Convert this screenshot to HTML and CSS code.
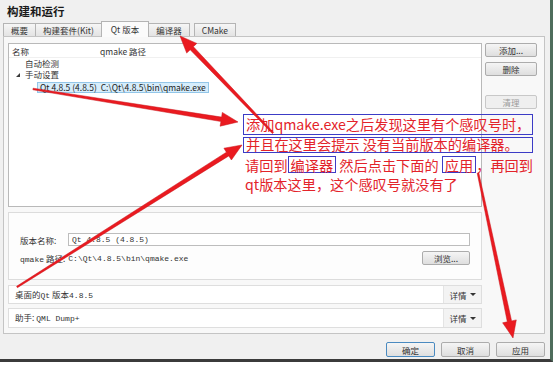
FILE: index.html
```html
<!DOCTYPE html>
<html>
  <head>
    <meta charset="utf-8">
    <link rel="stylesheet" href="styles.css">
  </head>
  <body>
    <div class="window">
      <div class="title">构建和运行</div>

      <div class="tabs">
        <div class="tab">概要</div>
        <div class="tab">构建套件(Kit)</div>
        <div class="tab active">Qt 版本</div>
        <div class="tab">编译器</div>
        <div class="tab tab-apart">CMake</div>
      </div>

      <div class="panel">
        <div class="versions">
          <div class="version-list">
            <div class="list-head">
              <span class="col-name">名称</span>
              <span>qmake 路径</span>
            </div>
            <div class="node">自动检测</div>
            <div class="node node-open"><span class="twisty"></span>手动设置</div>
            <div class="leaf">
              <span class="selected">Qt 4.8.5 (4.8.5)&nbsp;&nbsp;C:\Qt\4.8.5\bin\qmake.exe</span>
            </div>
          </div>
          <div class="side-buttons">
            <button class="btn">添加...</button>
            <button class="btn">删除</button>
            <button class="btn btn-disabled clean">清理</button>
          </div>
        </div>

        <div class="details">
          <div class="field">
            <span class="label">版本名称:</span>
            <div class="input mono">Qt 4.8.5 (4.8.5)</div>
          </div>
          <div class="field field-path">
            <span class="label"><span class="mono">qmake</span> 路径:</span>
            <span class="mono">C:\Qt\4.8.5\bin\qmake.exe</span>
            <button class="btn browse">浏览...</button>
          </div>
        </div>

        <div class="info-row">
          <div class="info-text">桌面的<span class="mono">Qt</span> 版本<span class="mono">4.8.5</span></div>
          <div class="more">详情 <span class="caret"></span></div>
        </div>
        <div class="info-row info-row-last">
          <div class="info-text">助手: <span class="mono">QML Dump+</span></div>
          <div class="more">详情 <span class="caret"></span></div>
        </div>
      </div>

      <div class="footer">
        <button class="btn btn-default">确定</button>
        <button class="btn">取消</button>
        <button class="btn">应用</button>
      </div>
    </div>

    <!-- annotation laid over the screenshot -->
    <div class="note">
      <div class="note-line boxed-line first">添加qmake.exe之后发现这里有个感叹号时，</div>
      <div class="note-line boxed-line second">并且在这里会提示 没有当前版本的编译器。</div>
      <div class="note-line third">请回到<span class="boxed">编译器 </span> 然后点击下面的 <span class="boxed">应用</span>，再回到</div>
      <div class="note-line">qt版本这里，这个感叹号就没有了</div>
    </div>

    <svg class="arrows" width="558" height="365" viewBox="0 0 558 365"></svg>

    <script>
      // start x, start y, tip x, tip y
      const arrows = [
        [33, 89, 238, 122],
        [17, 287, 242, 145],
        [273, 133, 180, 36],
        [478, 173, 513, 338],
      ];

      const svg = document.querySelector(".arrows");

      arrows.forEach(([x1, y1, x2, y2]) => {
        const len = Math.hypot(x2 - x1, y2 - y1);
        const ux = (x2 - x1) / len;
        const uy = (y2 - y1) / len;
        const nx = -uy;
        const ny = ux;

        const tail = 0.8;   // half width at the start
        const neck = 2.2;   // half width just before the head
        const headLen = 17;
        const headHalf = 7;

        const bx = x2 - ux * headLen;
        const by = y2 - uy * headLen;

        const pts = [
          [x1 + nx * tail, y1 + ny * tail],
          [bx + nx * neck, by + ny * neck],
          [bx + nx * headHalf, by + ny * headHalf],
          [x2, y2],
          [bx - nx * headHalf, by - ny * headHalf],
          [bx - nx * neck, by - ny * neck],
          [x1 - nx * tail, y1 - ny * tail],
        ];

        const poly = document.createElementNS("http://www.w3.org/2000/svg", "polygon");
        poly.setAttribute("points", pts.map((p) => p[0].toFixed(1) + "," + p[1].toFixed(1)).join(" "));
        poly.setAttribute("class", "arrow");
        svg.appendChild(poly);
      });
    </script>
  </body>
</html>
```

FILE: styles.css
```css
* {
  box-sizing: border-box;
}

body {
  margin: 0;
  background: #ffffff;
  font-family: "Noto Sans CJK SC", "Noto Sans", sans-serif;
  font-size: 8.5px;
  color: #333;
}

.mono {
  font-family: "Liberation Mono", "DejaVu Sans Mono", monospace;
  font-size: 8px;
}

.window {
  width: 553px;
  height: 362px;
  background: #f0f0f0;
  border-right: 3px solid #4e6d5c;
  border-bottom: 3px solid #3b3b3b;
  display: flex;
  flex-direction: column;
}

.title {
  height: 21px;
  padding: 4px 7px 0;
  font-size: 11.5px;
  line-height: 14px;
  font-weight: bold;
  color: #1a1a1a;
}

/* tabs */
.tabs {
  display: flex;
  align-items: flex-end;
  height: 15px;
  padding-left: 3px;
}

.tab {
  height: 13px;
  padding: 0 7px;
  line-height: 12px;
  border: 1px solid #b4b4b4;
  border-bottom: none;
  background: linear-gradient(#f6f6f6, #e3e3e3);
  margin-right: -1px;
  white-space: nowrap;
}

.tab.active {
  height: 16px;
  padding: 0 9px;
  line-height: 15px;
  margin-bottom: -1px;
  background: #fbfbfb;
  position: relative;
  z-index: 1;
}

.tab-apart {
  margin-left: 5px;
}

/* panel */
.panel {
  margin-left: 3px;
  width: 542px;
  height: 298px;
  border: 1px solid #c4c4c4;
  background: #f8f8f8;
  padding: 6px 4px 5px;
  display: flex;
  flex-direction: column;
}

.versions {
  display: flex;
  gap: 3px;
  height: 164px;
}

.version-list {
  width: 474px;
  border: 1px solid #b9b9b9;
  background: #fff;
}

.list-head {
  display: flex;
  height: 14px;
  line-height: 14px;
  padding-left: 3px;
  border-bottom: 1px solid #f0f0f0;
}

.col-name {
  width: 88px;
}

.node {
  height: 11px;
  line-height: 11px;
  padding-left: 16px;
}

.node-open {
  display: flex;
  align-items: center;
  padding-left: 7px;
}

.twisty {
  width: 0;
  height: 0;
  border-right: 4px solid #3a3a3a;
  border-top: 4px solid transparent;
  margin-right: 5px;
}

.leaf {
  height: 12px;
  padding: 1px 0 0 28px;
}

.selected {
  display: inline-block;
  height: 11px;
  line-height: 9px;
  padding: 0 2px;
  border: 1px solid #93c6e8;
  background: #d6edfb;
  color: #222;
  white-space: nowrap;
}

.side-buttons {
  display: flex;
  flex-direction: column;
  gap: 5px;
  width: 52px;
}

.btn {
  height: 14px;
  padding: 0;
  font-family: inherit;
  font-size: 8.5px;
  line-height: 12px;
  color: #333;
  border: 1px solid #acacac;
  border-radius: 2px;
  background: linear-gradient(#f5f5f5, #dedede);
}

.btn-disabled {
  color: #9a9a9a;
  border-color: #c8c8c8;
  background: #efefef;
}

.clean {
  margin-top: 14px;
}

/* version details */
.details {
  margin-top: 5px;
  width: 474px;
  height: 68px;
  border: 1px solid #dcdcdc;
  background: #fdfdfd;
  padding: 20px 11px 0;
}

.field {
  display: flex;
  align-items: center;
  height: 13px;
}

.field-path {
  margin-top: 5px;
  height: 14px;
}

.label {
  flex-shrink: 0;
  min-width: 48px;
  padding-right: 3px;
  white-space: nowrap;
}

.input {
  flex: 1;
  height: 13px;
  line-height: 11px;
  padding-left: 3px;
  border: 1px solid #bdbdbd;
  background: #fff;
}

.browse {
  margin-left: auto;
  width: 48px;
}

.info-row {
  display: flex;
  margin-top: 5px;
  width: 474px;
  height: 19px;
  border: 1px solid #dedede;
  background: #fff;
}

.info-row-last {
  margin-top: 4px;
  height: 20px;
}

.info-text {
  flex: 1;
  padding-left: 6px;
  line-height: 17px;
}

.more {
  width: 38px;
  display: flex;
  align-items: center;
  justify-content: center;
  gap: 3px;
  border-left: 1px solid #e4e4e4;
  background: #f3f3f3;
}

.caret {
  width: 0;
  height: 0;
  border-left: 3px solid transparent;
  border-right: 3px solid transparent;
  border-top: 3px solid #333;
}

/* dialog buttons */
.footer {
  display: flex;
  justify-content: flex-end;
  gap: 6px;
  margin-top: 8px;
  padding-right: 5px;
}

.footer .btn {
  width: 49px;
  height: 15px;
}

.btn-default {
  border-color: #4a8ac0;
}

/* annotation overlay */
.note {
  position: absolute;
  left: 243px;
  top: 114px;
  width: 315px;
  font-family: "Noto Sans CJK SC", sans-serif;
  font-size: 14.2px;
  color: #e3232a;
}

.note-line {
  line-height: 19px;
  padding-left: 2px;
  white-space: nowrap;
}

.boxed-line {
  width: 290px;
  border: 1px solid #3c3cc6;
}

.first {
  height: 21px;
}

.second {
  margin-top: 2px;
  height: 16px;
  line-height: 13px;
}

.third {
  margin-top: 3px;
  height: 19px;
}

.boxed {
  display: inline-block;
  height: 17px;
  line-height: 13px;
  vertical-align: top;
  border: 1px solid #3c3cc6;
  padding: 2px 2px 0;
}

.arrows {
  position: absolute;
  left: 0;
  top: 0;
  pointer-events: none;
}

.arrow {
  fill: #ea1a20;
  stroke: #c8141a;
  stroke-width: 0.5;
}
```
